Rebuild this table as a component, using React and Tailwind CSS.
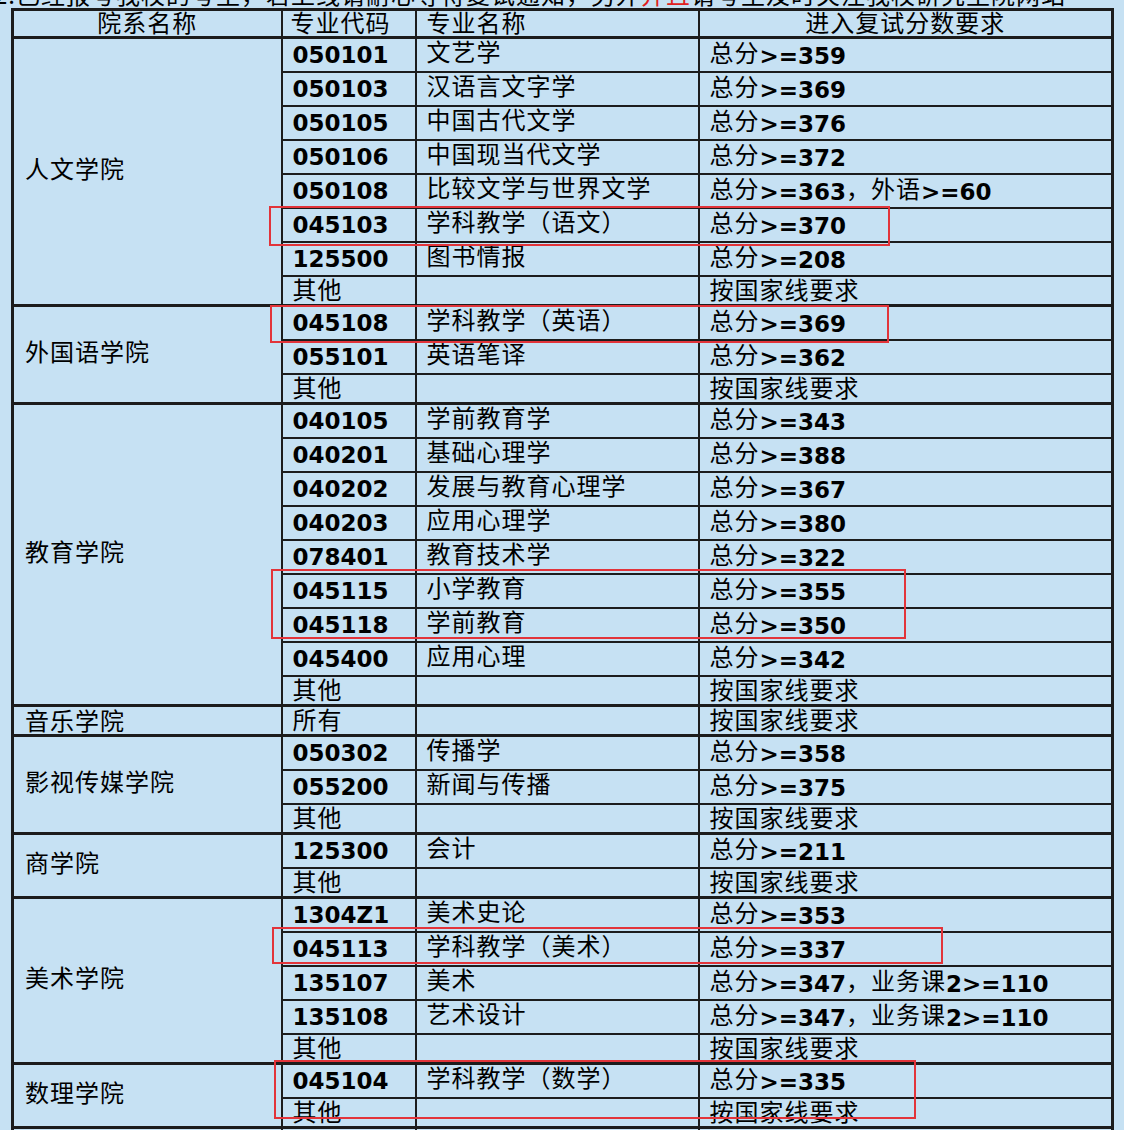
import React from 'react'

const CJK = "font-['Noto_Sans_CJK_SC',sans-serif]"
const NUM = "font-['DejaVu_Sans',sans-serif] font-bold tracking-normal text-[23px]"

// s: [total] | [total, extraLabel, extraValue] | null (按国家线要求)
const groups = [
    {
        name: '人文学院',
        rows: [
            ['050101', '文艺学', ['359']],
            ['050103', '汉语言文字学', ['369']],
            ['050105', '中国古代文学', ['376']],
            ['050106', '中国现当代文学', ['372']],
            ['050108', '比较文学与世界文学', ['363', '外语', '>=60']],
            ['045103', '学科教学（语文）', ['370']],
            ['125500', '图书情报', ['208']],
            ['其他', '', null],
        ],
    },
    {
        name: '外国语学院',
        rows: [
            ['045108', '学科教学（英语）', ['369']],
            ['055101', '英语笔译', ['362']],
            ['其他', '', null],
        ],
    },
    {
        name: '教育学院',
        rows: [
            ['040105', '学前教育学', ['343']],
            ['040201', '基础心理学', ['388']],
            ['040202', '发展与教育心理学', ['367']],
            ['040203', '应用心理学', ['380']],
            ['078401', '教育技术学', ['322']],
            ['045115', '小学教育', ['355']],
            ['045118', '学前教育', ['350']],
            ['045400', '应用心理', ['342']],
            ['其他', '', null],
        ],
    },
    {
        name: '音乐学院',
        rows: [['所有', '', null]],
    },
    {
        name: '影视传媒学院',
        rows: [
            ['050302', '传播学', ['358']],
            ['055200', '新闻与传播', ['375']],
            ['其他', '', null],
        ],
    },
    {
        name: '商学院',
        rows: [
            ['125300', '会计', ['211']],
            ['其他', '', null],
        ],
    },
    {
        name: '美术学院',
        rows: [
            ['1304Z1', '美术史论', ['353']],
            ['045113', '学科教学（美术）', ['337']],
            ['135107', '美术', ['347', '业务课', '2>=110']],
            ['135108', '艺术设计', ['347', '业务课', '2>=110']],
            ['其他', '', null],
        ],
    },
    {
        name: '数理学院',
        rows: [
            ['045104', '学科教学（数学）', ['335']],
            ['其他', '', null],
        ],
    },
    {
        name: '美育学院',
        rows: [['所有', '', null]],
    },
]

const boxes = [
    'left-[269px] top-[206px] w-[621px] h-[40px]',
    'left-[270px] top-[305px] w-[619px] h-[38px]',
    'left-[271px] top-[569px] w-[635px] h-[70px]',
    'left-[272px] top-[927px] w-[671px] h-[37px]',
    'left-[274px] top-[1060px] w-[642px] h-[59px]',
]

// chinese text sits a little higher in the cell than the bold digits
function Cj({ children, up = '-top-[3px]' }) {
    return <span className={`${CJK} relative ${up}`}>{children}</span>
}

function Score({ s }) {
    if (!s) return <Cj up='-top-[1px]'>按国家线要求</Cj>
    return (
        <>
            <Cj up='-top-[2px]'>总分</Cj>
            <span className={NUM}>&gt;={s[0]}</span>
            {s[1] && (
                <>
                    <Cj up='-top-[2px]'>，{s[1]}</Cj>
                    <span className={NUM}>{s[2]}</span>
                </>
            )}
        </>
    )
}

function App() {
    const cell = 'border-2 border-[#1c1c1c] align-middle p-0'
    return (
        <div className='relative min-h-screen bg-[#c6e1f3] overflow-hidden text-black'>
            {/* cut-off line of text above the table */}
            <div className='h-[8px] overflow-hidden'>
                <div className={`${CJK} text-[24px] tracking-[1px] leading-[26px] whitespace-nowrap -mt-[19px] -ml-[6px]`}>
                    2.已经报考我校的考生，若上线请耐心等待复试通知，另外
                    <span className='text-[#e02020]'>并且</span>
                    请考生及时关注我校研究生院网站
                </div>
            </div>

            <table className='ml-[11px] w-[1100px] table-fixed border-collapse border-[3px] border-[#1c1c1c] text-[24px] tracking-[1px]'>
                <colgroup>
                    <col className='w-[269px]' />
                    <col className='w-[134px]' />
                    <col className='w-[283px]' />
                    <col className='w-[414px]' />
                </colgroup>
                <thead>
                    <tr className='h-[26px] leading-none'>
                        <th className={`${cell} font-normal text-center`}><Cj up='-top-[1px]'>院系名称</Cj></th>
                        <th className={`${cell} font-normal text-left pl-[8px]`}><Cj up='-top-[1px]'>专业代码</Cj></th>
                        <th className={`${cell} font-normal text-left pl-[10px]`}><Cj up='-top-[1px]'>专业名称</Cj></th>
                        <th className={`${cell} font-normal text-center`}><Cj up='-top-[1px]'>进入复试分数要求</Cj></th>
                    </tr>
                </thead>
                <tbody>
                    {groups.map((g) =>
                        g.rows.map((r, i) => {
                            const isCode = /\d/.test(r[0])
                            const top = i === 0 ? 'border-t-[3px]' : ''
                            const h = isCode ? 'h-[34px]' : 'h-[30px]'
                            return (
                                <tr key={g.name + i} className={`${h} leading-none`}>
                                    {i === 0 && (
                                        <td rowSpan={g.rows.length} className={`${cell} ${top} pl-[11px]`}>
                                            <Cj up={g.rows.length === 1 ? 'top-0' : '-top-[3px]'}>{g.name}</Cj>
                                        </td>
                                    )}
                                    <td className={`${cell} ${top} pl-[10px]`}>
                                        {isCode ? <span className={NUM}>{r[0]}</span> : <Cj up='-top-[1px]'>{r[0]}</Cj>}
                                    </td>
                                    <td className={`${cell} ${top} pl-[10px]`}>
                                        <Cj>{r[1]}</Cj>
                                    </td>
                                    <td className={`${cell} ${top} pl-[10px] whitespace-nowrap`}>
                                        <Score s={r[2]} />
                                    </td>
                                </tr>
                            )
                        })
                    )}
                </tbody>
            </table>

            {/* red highlight boxes */}
            {boxes.map((b) => (
                <div key={b} className={`absolute ${b} border-2 border-[#e2343a] pointer-events-none`} />
            ))}
        </div>
    )
}

export default App
